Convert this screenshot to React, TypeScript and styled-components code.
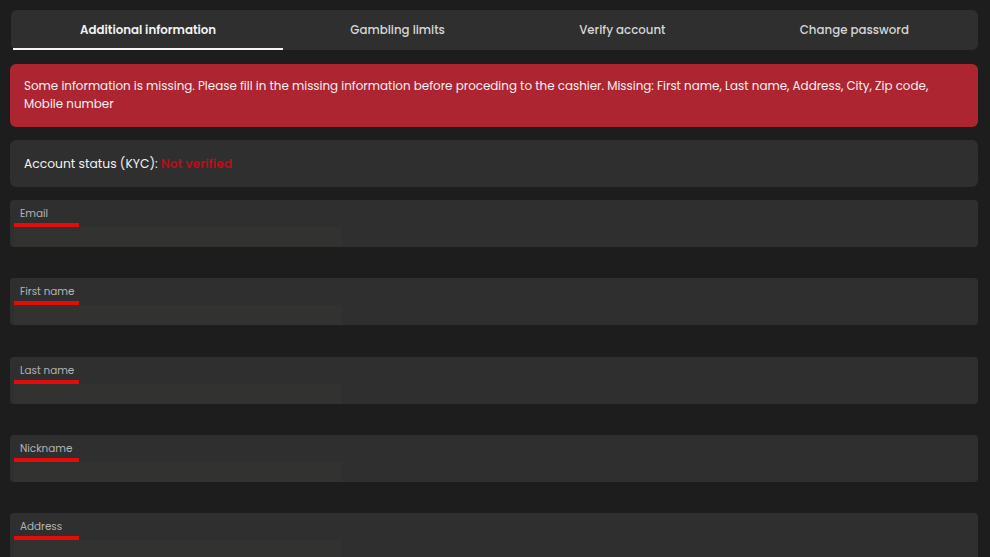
import React from 'react'
import styled, { createGlobalStyle } from 'styled-components'

const GlobalStyle = createGlobalStyle`
  html, body {
    margin: 0;
    padding: 0;
    background: #1d1d1d;
    font-family: Poppins, "Open Sans", "Liberation Sans", sans-serif;
  }
`

const Page = styled.div`
  padding: 10px 12px 0 10px;
  display: flex;
  flex-direction: column;
  height: 557px;
  box-sizing: border-box;
  overflow: hidden;
`

const TabBar = styled.div`
  display: flex;
  margin: 0 0 14px 1px;
  padding: 0 2px;
  height: 40px;
  flex-shrink: 0;
  background: #2f2f2f;
  border-radius: 6px;
`

const Tab = styled.div<{ $active?: boolean }>`
  flex: 1 1 auto;
  display: flex;
  align-items: center;
  justify-content: center;
  font-size: 11.8px;
  font-weight: ${p => (p.$active ? 600 : 500)};
  color: ${p => (p.$active ? '#f2f2f2' : '#d6d6d6')};
  border-bottom: 2px solid ${p => (p.$active ? '#f4f4f4' : 'transparent')};
  padding-top: 3px;
  box-sizing: border-box;
  white-space: nowrap;
`

const Alert = styled.div`
  background: #ad2531;
  border-radius: 6px;
  color: #f6f0f0;
  font-size: 11.9px;
  line-height: 18px;
  padding: 13px 20px 14px 14px;
  margin-bottom: 13px;
  flex-shrink: 0;
`

const StatusBox = styled.div`
  background: #2f2f2f;
  border-radius: 6px;
  height: 47px;
  flex-shrink: 0;
  display: flex;
  align-items: center;
  padding: 0 14px;
  font-size: 12.3px;
  color: #f2f2f2;
  margin-bottom: 13px;
`

const NotVerified = styled.span`
  color: #b2111d;
  font-weight: 600;
  margin-left: 3px;
`

const FieldList = styled.div`
  display: flex;
  flex-direction: column;
  gap: 31.3px;
`

const Field = styled.div`
  background: #2f2f2f;
  border-radius: 4px;
  height: 47px;
  position: relative;
  flex-shrink: 0;
`

const Label = styled.div`
  position: relative;
  font-size: 10.4px;
  color: #b4b4b4;
  padding: 8px 0 0 10px;
  line-height: 12px;
`

const LabelBar = styled.div`
  position: relative;
  width: 65px;
  height: 4px;
  background: #e50b0b;
  margin: 3px 0 0 4px;
`

const InputArea = styled.div`
  position: absolute;
  left: 4px;
  top: 27px;
  width: 328px;
  bottom: 0;
  background: #323230;
`

const fields = ['Email', 'First name', 'Last name', 'Nickname', 'Address']

export default function App() {
  return (
    <>
      <GlobalStyle />
      <Page>
        <TabBar>
          <Tab $active>Additional information</Tab>
          <Tab>Gambling limits</Tab>
          <Tab>Verify account</Tab>
          <Tab>Change password</Tab>
        </TabBar>
        <Alert>
          Some information is missing. Please fill in the missing information before proceding to the cashier. Missing: First name, Last name, Address, City, Zip code, Mobile number
        </Alert>
        <StatusBox>
          Account status (KYC):<NotVerified>Not verified</NotVerified>
        </StatusBox>
        <FieldList>
          {fields.map(f => (
            <Field key={f}>
              <InputArea />
              <Label>{f}</Label>
              <LabelBar />
            </Field>
          ))}
        </FieldList>
      </Page>
    </>
  )
}
